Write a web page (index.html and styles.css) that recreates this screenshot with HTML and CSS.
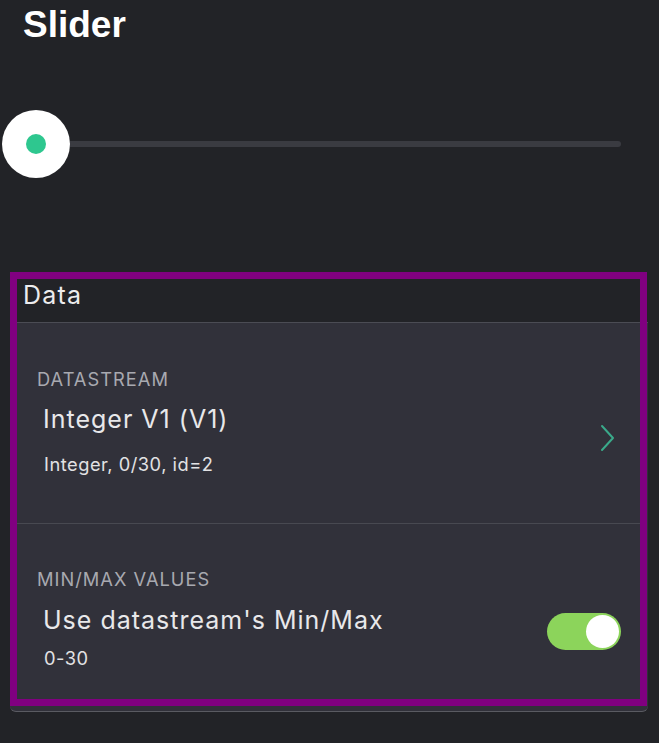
FILE: index.html
```html
<!DOCTYPE html>
<html>
<head>
<meta charset="utf-8">
<link rel="stylesheet" href="styles.css">
</head>
<body>
<h1 class="title">Slider</h1>
<div class="slider">
  <div class="thumb"><span class="dot"></span></div>
  <div class="track"></div>
</div>
<section class="data">
  <div class="data-head">Data</div>
  <div class="card">
    <div class="row row-ds">
      <div class="row-text">
        <div class="label">DATASTREAM</div>
        <div class="main">Integer V1 (V1)</div>
        <div class="sub">Integer, 0/30, id=2</div>
      </div>
      <svg class="chev" width="16" height="28" viewBox="0 0 16 28"><path d="M2 2 L13 14 L2 26" fill="none" stroke="#3aa98a" stroke-width="2" stroke-linecap="round" stroke-linejoin="round"/></svg>
    </div>
    <div class="row row-mm">
      <div class="row-text">
        <div class="label">MIN/MAX VALUES</div>
        <div class="main">Use datastream's Min/Max</div>
        <div class="sub">0-30</div>
      </div>
      <div class="toggle"><span class="knob"></span></div>
    </div>
  </div>
  <div class="highlight"></div>
</section>
</body>
</html>
```
FILE: styles.css
```css
html, body {
  margin: 0;
  padding: 0;
  background: #222327;
  font-family: Inter, "Liberation Sans", sans-serif;
  color: #e6e6e8;
}
body {
  width: 659px;
  height: 743px;
  overflow: hidden;
}
.title {
  margin: 0;
  padding: 3px 0 0 23px;
  font-family: "Liberation Sans", Arial, sans-serif;
  font-weight: bold;
  font-size: 37px;
  line-height: 44px;
  color: #ffffff;
}
.slider {
  margin-top: 63px;
  display: flex;
  align-items: center;
  padding-left: 2px;
  height: 68px;
}
.thumb {
  width: 68px;
  height: 68px;
  border-radius: 50%;
  background: #ffffff;
  display: flex;
  align-items: center;
  justify-content: center;
  flex: none;
}
.dot {
  width: 20px;
  height: 20px;
  border-radius: 50%;
  background: #2ec78f;
}
.track {
  width: 551px;
  height: 6px;
  border-radius: 0 3px 3px 0;
  background: #3a3b41;
}
.data {
  position: relative;
  margin: 94px 0 0 10px;
  width: 638px;
}
.data-head {
  height: 50px;
  padding-left: 13px;
  font-size: 25px;
  line-height: 46px;
  letter-spacing: 1.2px;
  color: #ececee;
}
.card {
  background: #31313a;
  border-top: 1px solid #4b4c54;
  border-bottom: 1px solid #5a5b62;
  border-radius: 0 0 6px 6px;
}
.row {
  display: flex;
  align-items: flex-start;
  box-sizing: border-box;
}
.row-ds {
  height: 201px;
  border-bottom: 1px solid #484951;
  margin: 0 7px;
  padding: 45px 25px 0 20px;
}
.row-mm {
  height: 187px;
  padding: 44px 27px 0 27px;
}
.row-text {
  flex: 1;
}
.label {
  font-size: 18.3px;
  line-height: 22px;
  color: #a8a9b0;
  letter-spacing: 1px;
}
.main {
  font-size: 25px;
  line-height: 32px;
  margin: 13px 0 0 6px;
  letter-spacing: 1px;
  color: #e8e8ea;
}
.sub {
  font-size: 18.3px;
  line-height: 22px;
  margin: 18px 0 0 7px;
  letter-spacing: 0.5px;
  color: #e2e2e4;
}
.row-mm .main { margin-top: 14px; }
.row-mm .sub { margin-top: 11px; }
.chev {
  margin-top: 56px;
}
.toggle {
  width: 74px;
  height: 37px;
  border-radius: 19px;
  background: #8cd45b;
  display: flex;
  align-items: center;
  justify-content: flex-end;
  padding-right: 2px;
  box-sizing: border-box;
  margin-top: 45px;
}
.knob {
  width: 33px;
  height: 33px;
  border-radius: 50%;
  background: #ffffff;
}
.highlight {
  position: absolute;
  top: 0;
  left: 0;
  right: 1px;
  bottom: 6px;
  border: 7px solid #800080;
  pointer-events: none;
}
```
